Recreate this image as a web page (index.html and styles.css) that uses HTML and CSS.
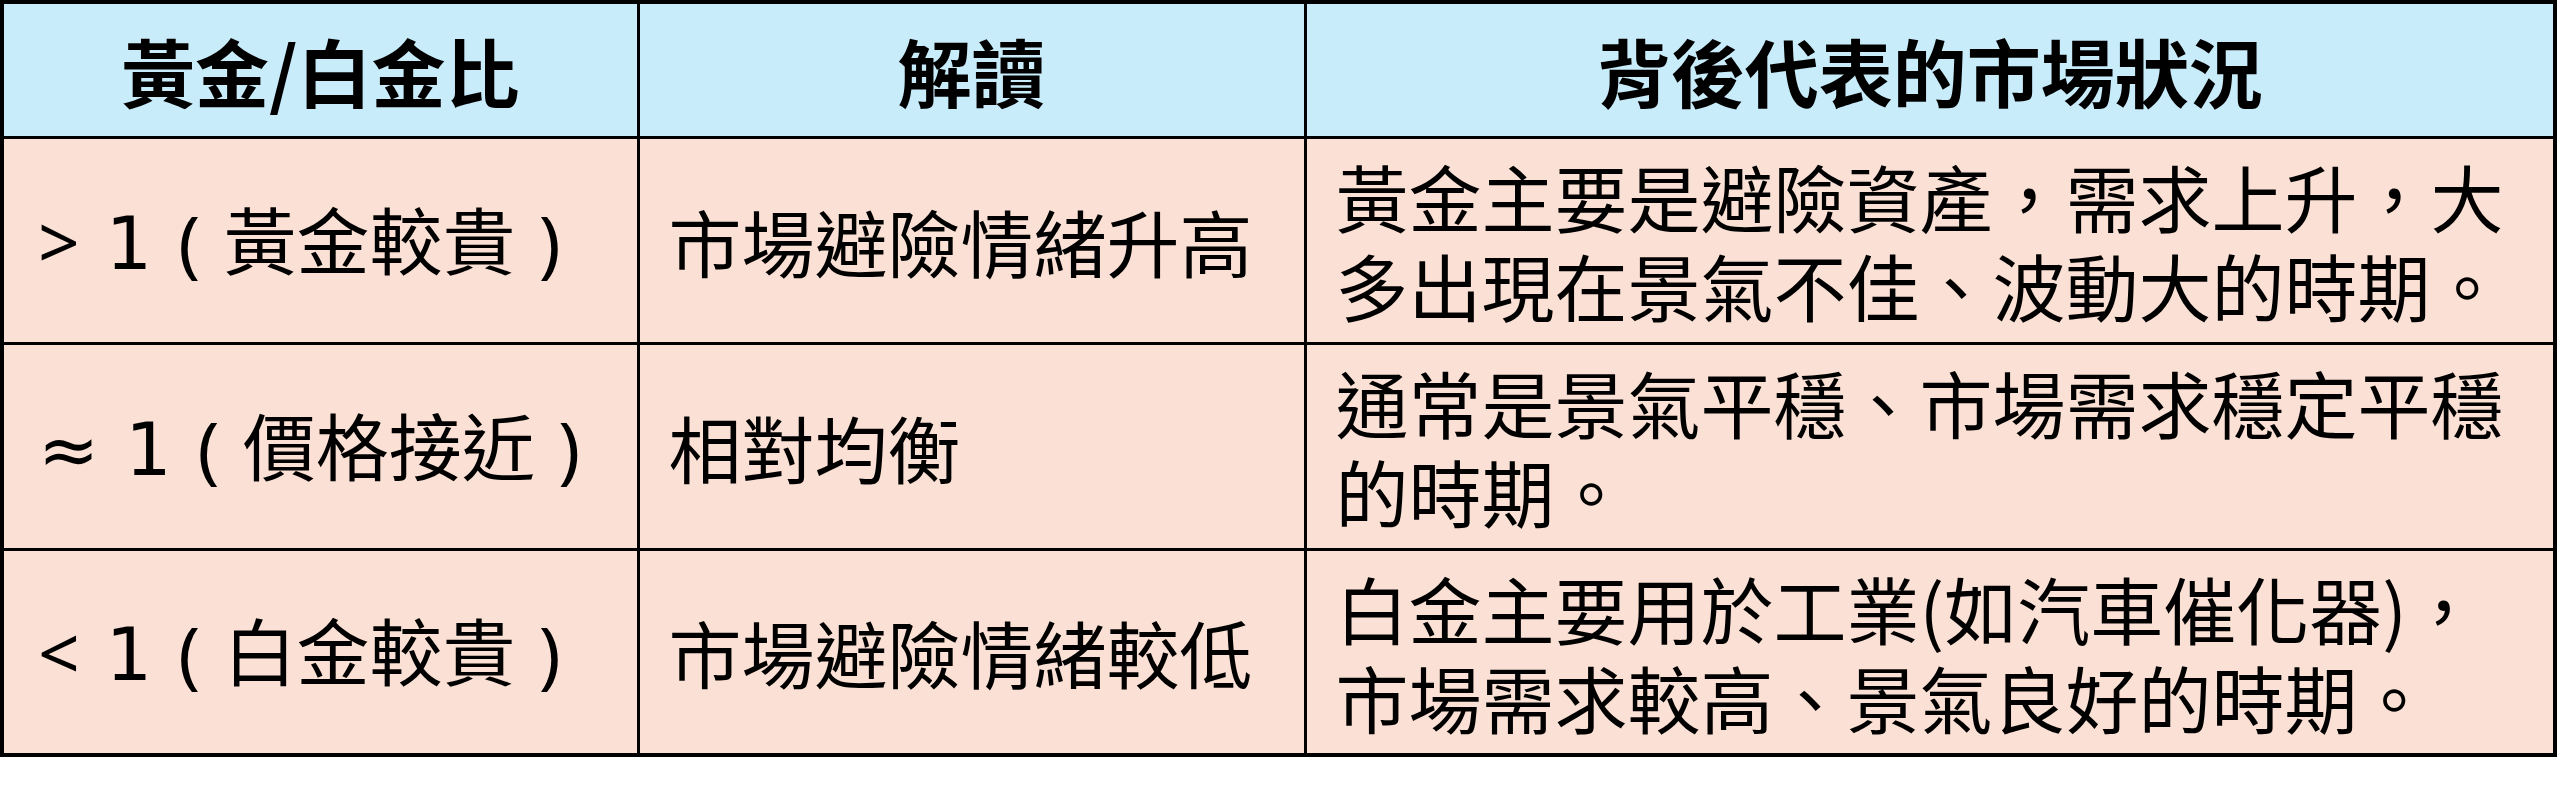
FILE: index.html
```html
<!DOCTYPE html>
<html lang="zh-Hant">
<head>
<meta charset="utf-8">
<title>黃金/白金比</title>
<link rel="stylesheet" href="styles.css">
</head>
<body>
<table class="ratio-table">
  <colgroup>
    <col class="c1">
    <col class="c2">
    <col class="c3">
  </colgroup>
  <thead>
    <tr class="head-row">
      <th>黃金/白金比</th>
      <th>解讀</th>
      <th>背後代表的市場狀況</th>
    </tr>
  </thead>
  <tbody>
    <tr class="body-row">
      <td class="ratio"><span class="sym">&gt; <span class="num">1</span> (</span> 黃金較貴 <span class="sym">)</span></td>
      <td>市場避險情緒升高</td>
      <td>黃金主要是避險資產，需求上升，大<br>多出現在景氣不佳、波動大的時期。</td>
    </tr>
    <tr class="body-row">
      <td class="ratio"><span class="sym">≈ <span class="num">1</span> (</span> 價格接近 <span class="sym">)</span></td>
      <td>相對均衡</td>
      <td>通常是景氣平穩、市場需求穩定平穩<br>的時期。</td>
    </tr>
    <tr class="body-row">
      <td class="ratio"><span class="sym">&lt; <span class="num">1</span> (</span> 白金較貴 <span class="sym">)</span></td>
      <td>市場避險情緒較低</td>
      <td>白金主要用於工業(如汽車催化器)，<br>市場需求較高、景氣良好的時期。</td>
    </tr>
  </tbody>
</table>
</body>
</html>
```
FILE: styles.css
```css
html, body {
  margin: 0;
  padding: 0;
  background: #ffffff;
}

.ratio-table {
  border-collapse: collapse;
  table-layout: fixed;
  width: 2557px;
  margin: 0;
  font-family: "Noto Sans CJK TC", "Noto Sans", sans-serif;
  color: #000;
  border: 4px solid #000;
}

.c1 { width: 636px; }
.c2 { width: 667px; }
.c3 { width: auto; }

.ratio-table th,
.ratio-table td {
  border: 3px solid #000;
  box-sizing: border-box;
}

.head-row th {
  background: #c9ecfb;
  height: 135px;
  font-size: 74px;
  font-weight: 700;
  text-align: center;
  vertical-align: middle;
  padding: 0;
  line-height: 1;
}

.body-row td {
  background: #fbe1d5;
  height: 206px;
  font-size: 73px;
  font-weight: 400;
  text-align: left;
  vertical-align: middle;
  padding: 0 0 0 29px;
  line-height: 89px;
  white-space: nowrap;
}

.body-row td.ratio {
  padding-left: 34px;
  word-spacing: 7px;
}

.sym {
  font-family: "Noto Sans", "DejaVu Sans", sans-serif;
}

.num {
  font-family: "DejaVu Sans", "Noto Sans", sans-serif;
}
```
